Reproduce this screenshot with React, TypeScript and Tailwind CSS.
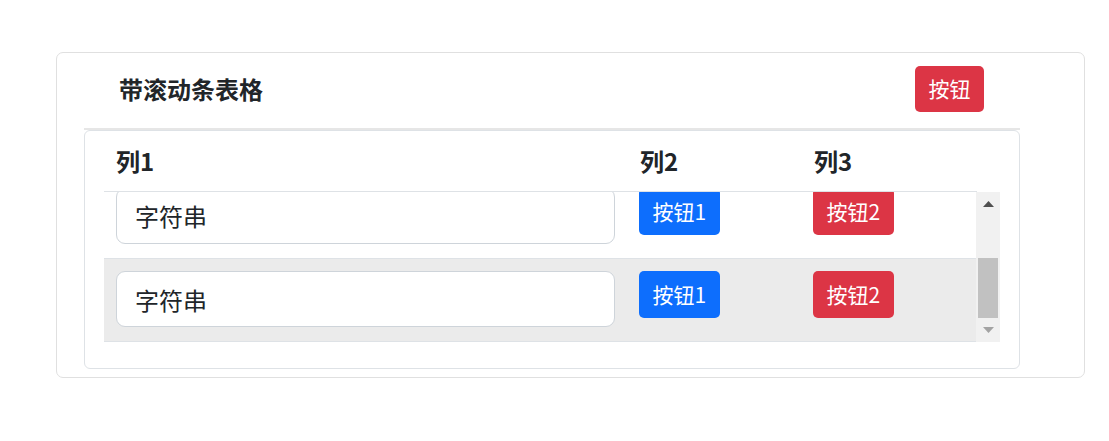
import { useEffect, useRef } from "react";

const rows = [
    { text: "字符串", hover: false },
    { text: "字符串", hover: true },
];

export default function App() {
    const scrollRef = useRef<HTMLDivElement>(null);

    useEffect(() => {
        // scrolled all the way down, as in the picture
        if (scrollRef.current) {
            scrollRef.current.scrollTop = scrollRef.current.scrollHeight;
        }
    }, []);

    return (
        <div className="min-h-screen bg-white pt-[52px] pl-[56px] pr-[24px] text-[#212529] font-['Noto_Sans_CJK_SC','Noto_Sans',sans-serif]">
            <div className="h-[326px] rounded-[7px] border border-[#e0e0e0]">
                <div className="ml-[27px] mr-[64px]">
                    <div className="flex h-[77px] items-center justify-between border-b-2 border-[#e6e6e6] pb-[4px] pl-[35px] pr-[36px]">
                        <h5 className="text-[24px] font-bold leading-none">带滚动条表格</h5>
                        <button className="h-[46px] rounded-[5px] bg-[#dc3545] px-[13.5px] text-[21px] leading-none text-white">
                            按钮
                        </button>
                    </div>

                    <div className="h-[239px] rounded-[6px] border border-[#dee2e6] px-[19px]">
                        <div className="grid h-[61px] w-[873px] grid-cols-[523px_174px_1fr] items-center border-b border-[#dee2e6] text-[24px] font-bold">
                            <div className="px-3">列1</div>
                            <div className="px-[13px]">列2</div>
                            <div className="px-[13px]">列3</div>
                        </div>

                        <div className="flex h-[150px]">
                            <div
                                ref={scrollRef}
                                className="h-[150px] w-[873px] overflow-y-auto [scrollbar-width:none] [&::-webkit-scrollbar]:hidden"
                            >
                                {rows.map((row, i) => (
                                    <div
                                        key={i}
                                        className={`grid h-[83.5px] grid-cols-[523px_174px_1fr] items-start border-b border-[#dee2e6] pt-[12.5px] ${row.hover ? "bg-[#ebebeb]" : "bg-white"}`}
                                    >
                                        <div className="px-3">
                                            <input
                                                readOnly
                                                value={row.text}
                                                className="h-[56px] w-full rounded-[9px] border border-[#ced4da] bg-white px-[18px] text-[24px] text-[#212529] outline-none"
                                            />
                                        </div>
                                        <div className="px-3">
                                            <button className="h-[47px] rounded-[5px] bg-[#0d6efd] px-[13.5px] text-[21px] leading-none text-white">
                                                按钮1
                                            </button>
                                        </div>
                                        <div className="px-3">
                                            <button className="h-[47px] rounded-[5px] bg-[#dc3545] px-[13.5px] text-[21px] leading-none text-white">
                                                按钮2
                                            </button>
                                        </div>
                                    </div>
                                ))}
                            </div>

                            {/* scrollbar drawing */}
                            <div className="flex h-[150px] w-[24px] flex-col bg-[#f1f1f1]">
                                <div className="flex h-[24px] items-center justify-center">
                                    <svg width="11" height="6" viewBox="0 0 11 6">
                                        <polygon points="5.5,0 11,6 0,6" fill="#505050" />
                                    </svg>
                                </div>
                                <div className="flex flex-1 flex-col justify-end px-[2px]">
                                    <div className="h-[60px] bg-[#c1c1c1]" />
                                </div>
                                <div className="flex h-[24px] items-center justify-center">
                                    <svg width="11" height="6" viewBox="0 0 11 6">
                                        <polygon points="0,0 11,0 5.5,6" fill="#a3a3a3" />
                                    </svg>
                                </div>
                            </div>
                        </div>
                    </div>
                </div>
            </div>
        </div>
    );
}
